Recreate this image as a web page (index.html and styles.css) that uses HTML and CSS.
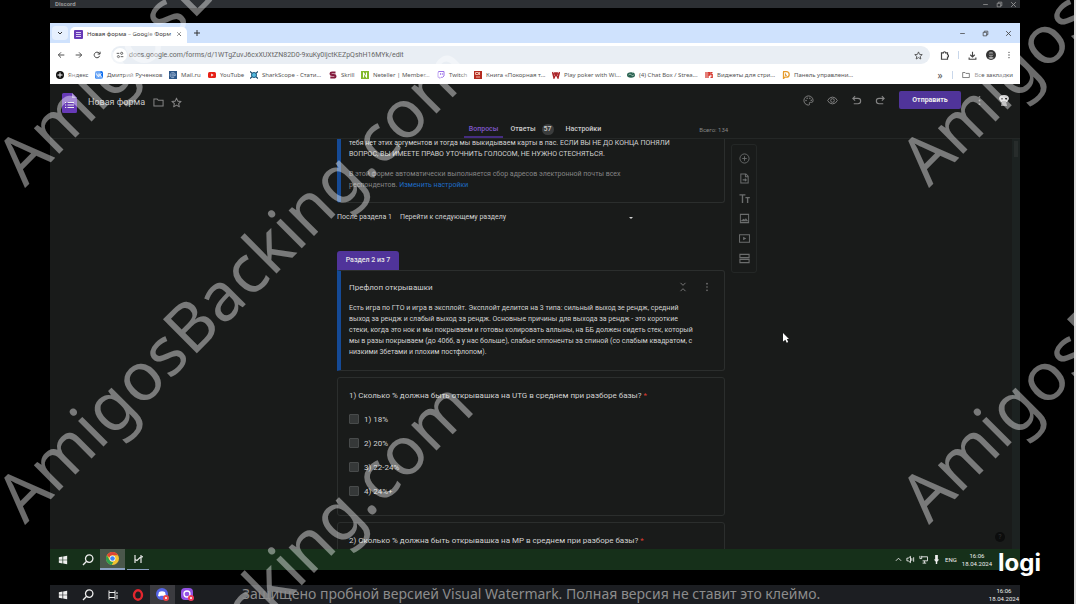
FILE: index.html
```
<!DOCTYPE html>
<html lang="ru">
<head>
<meta charset="utf-8">
<title>Новая форма – Google Формы</title>
<link rel="stylesheet" href="styles.css">
</head>
<body>
<svg class="defs" aria-hidden="true">
  <symbol id="win" viewBox="0 0 12 12"><path fill="currentColor" d="M1 2.6l4.4-.7v3.7H1zM6.2 1.8L11 1v4.6H6.2zM1 6.4h4.4v3.7L1 9.4zM6.2 6.4H11V11l-4.8-.8z"/></symbol>
  <symbol id="search" viewBox="0 0 12 12"><g fill="none" stroke="currentColor" stroke-width="1.3"><circle cx="7.2" cy="4.6" r="3.7"/><path d="M4.6 7.3L1 11"/></g></symbol>
  <symbol id="star" viewBox="0 0 12 12"><path fill="none" stroke="currentColor" stroke-width="1.1" stroke-linejoin="round" d="M6 1.2l1.4 3.3 3.6.3-2.7 2.4.8 3.5L6 8.8l-3.1 1.9.8-3.5L1 4.8l3.6-.3z"/></symbol>
  <symbol id="folder" viewBox="0 0 12 12"><path fill="none" stroke="currentColor" stroke-width="1.1" d="M1 2.3h3.6l1.2 1.3H11v6.2H1z"/></symbol>
  <symbol id="dots" viewBox="0 0 12 12"><g fill="currentColor"><circle cx="6" cy="2" r="1"/><circle cx="6" cy="6" r="1"/><circle cx="6" cy="10" r="1"/></g></symbol>
  <symbol id="close" viewBox="0 0 12 12"><path stroke="currentColor" stroke-width="1.5" d="M2 2l8 8M10 2l-8 8"/></symbol>
  <symbol id="minus" viewBox="0 0 12 12"><path stroke="currentColor" stroke-width="1.3" d="M2 6h8"/></symbol>
  <symbol id="restore" viewBox="0 0 12 12"><path fill="none" stroke="currentColor" stroke-width="1.3" d="M2 4h6v6H2zM4 4V2h6v6H8"/></symbol>
  <symbol id="down" viewBox="0 0 12 12"><path fill="none" stroke="currentColor" stroke-width="2" d="M2 4l4 4 4-4"/></symbol>
  <symbol id="back" viewBox="0 0 12 12"><path fill="none" stroke="currentColor" stroke-width="1.4" d="M11 6H2M6 2L2 6l4 4"/></symbol>
  <symbol id="forward" viewBox="0 0 12 12"><path fill="none" stroke="currentColor" stroke-width="1.4" d="M1 6h9M6 2l4 4-4 4"/></symbol>
  <symbol id="reload" viewBox="0 0 12 12"><path fill="none" stroke="currentColor" stroke-width="1.5" d="M10 7.2A4.2 4.2 0 1 1 9 3l1.4 1.4M10.6 1v3.6H7"/></symbol>
  <symbol id="undo" viewBox="0 0 12 12"><path fill="none" stroke="currentColor" stroke-width="1.2" d="M4.5 1.2L2 3.7l2.500 2.500M2 3.700h5.600a2.900 2.900 0 0 1 0 5.900H3"/></symbol>
</svg>

<div class="screen">
  <div class="discord">
    <span>Discord</span>
    <span class="win-controls"><svg class="ico7"><use href="#minus"/></svg><svg class="ico7"><use href="#restore"/></svg><svg class="ico7"><use href="#close"/></svg></span>
  </div>

  <div class="browser">
    <div class="tabstrip">
      <button class="tab-search" aria-label="Поиск вкладок"><svg class="ico6"><use href="#down"/></svg></button>
      <div class="browser-tab">
        <svg class="ico9" viewBox="0 0 9 9"><rect width="9" height="9" rx="1" fill="#673ab7"/><path stroke="#d9cdf0" stroke-width="1" d="M2 2.500h5M2 4.500h5M2 6.500h5"/></svg>
        <span class="tab-title">Новая форма – Google Форм</span>
        <button aria-label="Закрыть"><svg class="ico6"><use href="#close"/></svg></button>
      </div>
      <button class="new-tab" aria-label="Новая вкладка"><svg class="ico6" viewBox="0 0 6 6"><path stroke="currentColor" d="M3 0v6M0 3h6"/></svg></button>
      <span class="win-controls wide"><svg class="ico7"><use href="#minus"/></svg><svg class="ico7"><use href="#restore"/></svg><svg class="ico7"><use href="#close"/></svg></span>
    </div>

    <div class="toolbar">
      <button aria-label="Назад"><svg class="ico8"><use href="#back"/></svg></button>
      <button aria-label="Вперёд"><svg class="ico8"><use href="#forward"/></svg></button>
      <button aria-label="Обновить"><svg class="ico8"><use href="#reload"/></svg></button>
      <div class="omnibox">
        <span class="site-info"><svg class="ico8" viewBox="0 0 12 12"><g fill="none" stroke="#555" stroke-width="1.4"><path d="M5 3.500h-4M7 8.500h4"/><circle cx="8.500" cy="3.500" r="1.600"/><circle cx="3.500" cy="8.500" r="1.600"/></g></svg></span>
        <input type="text" aria-label="Адрес" value="docs.google.com/forms/d/1WTgZuvJ6cxXUXtZN82D0-9xuKy0ijctKEZpQshH16MYk/edit">
        <svg class="ico9"><use href="#star"/></svg>
      </div>
      <div class="tools">
        <svg class="ico9" viewBox="0 0 12 12"><path fill="none" stroke="currentColor" stroke-width="1.600" d="M2 2.500h2.500a1.500 1.500 0 0 1 3 0H10V5a1.500 1.500 0 0 1 0 3v3H2z"/></svg>
        <span class="divider"></span>
        <svg class="ico9" viewBox="0 0 12 12"><path fill="none" stroke="currentColor" stroke-width="1.500" d="M6 1v6.500M3 5l3 3 3-3M1.500 8.500V11h9V8.500"/></svg>
        <svg class="ico10" viewBox="0 0 12 12"><circle cx="6" cy="6" r="6" fill="#333"/><circle cx="6" cy="5" r="2.800" fill="#888"/><path fill="#222" d="M3 4.500h6v1H3z"/><path fill="#aaa" d="M2.500 9.500q3.500-3 7 0L6 11z"/></svg>
        <svg class="ico8"><use href="#dots"/></svg>
      </div>
    </div>

    <nav class="bookmarks">
      <a href="#"><svg class="ico8" viewBox="0 0 8 8"><circle cx="4" cy="4" r="4" fill="#111"/><path stroke="#fff" d="M4 1.500v5M1.500 4h5"/></svg>Яндекс</a>
      <a href="#"><svg class="ico8" viewBox="0 0 8 8"><rect width="8" height="8" rx="2" fill="#0a6cf0"/><path fill="none" stroke="#fff" d="M1.500 2.500q.5 3 2.500 3v-3M6.500 2.500L4.500 4l2 1.600"/></svg>Дмитрий Рученков</a>
      <a href="#"><svg class="ico8" viewBox="0 0 8 8"><rect width="8" height="8" fill="#2d5789"/><g fill="none" stroke="#a8bfdb" stroke-width=".8"><circle cx="4" cy="4" r="1.200"/><path d="M5.200 4q.2 1.500 1.200.5A2.600 2.600 0 1 0 5.200 6.300"/></g></svg>Mail.ru</a>
      <a href="#"><svg class="ico8" viewBox="0 0 8 8"><rect y="1" width="8" height="6" rx="1.500" fill="#e62117"/><path fill="#fff" d="M3.200 2.600L5.600 4 3.200 5.400z"/></svg>YouTube</a>
      <a href="#"><svg class="ico8" viewBox="0 0 8 8"><path stroke="#174768" stroke-width="1.200" d="M0 .5l8 7M8 .5l-8 7"/><circle cx="4" cy="4" r="2.500" fill="#56bce0" stroke="#1d5a80"/></svg>SharkScope - Стати...</a>
      <a href="#"><svg class="ico8" viewBox="0 0 8 8"><path fill="none" stroke="#841c3e" stroke-width="2" d="M6.500 1.400H3Q1.500 1.400 1.500 2.700T3 4h2q1.500 0 1.500 1.300T5 6.600H1.300"/></svg>Skrill</a>
      <a href="#"><svg class="ico8" viewBox="0 0 8 8"><rect width="8" height="8" fill="#83b92c"/><path fill="none" stroke="#fff" d="M2.500 6.500v-5l3 5v-5"/></svg>Neteller | Member...</a>
      <a href="#"><svg class="ico8" viewBox="0 0 8 8"><path fill="#fff" stroke="#9a70e8" d="M1.500.5H7V5L5.500 6.300H4L2.800 7.500V6.300H1V2z"/><path stroke="#9a70e8" stroke-width=".8" d="M3.500 2v2M5.300 2v2"/></svg>Twitch</a>
      <a href="#"><svg class="ico8" viewBox="0 0 8 8"><rect width="8" height="8" fill="#b42b20"/><path stroke="#f0b9a8" d="M1.500 1.500h3v2h-3zM2 6h4M5.500 1v3" fill="none"/></svg>Книга «Покорная т...</a>
      <a href="#"><svg class="ico8" viewBox="0 0 8 8"><path fill="none" stroke="#ab2429" stroke-width="1.400" d="M.5 1l1.500 6L4 3l2 4 1.500-6M1.500 3h5M3 1v2M5 1v2"/></svg>Play poker with Wi...</a>
      <a href="#"><svg class="ico8" viewBox="0 0 8 8"><ellipse cx="4" cy="4" rx="4" ry="2.800" fill="#286150"/><path fill="none" stroke="#b6cec5" stroke-width=".8" d="M1.500 4q1.500-2 3 0t2.500-.5M5 2l2-1"/></svg>(4) Chat Box / Strea...</a>
      <a href="#"><svg class="ico8" viewBox="0 0 8 8"><path fill="none" stroke="#d63a30" stroke-width="1.300" d="M1 1v6M3 7V1.600h1.500v2.500H3M7.500 1.600H6v2h1.200v2.800H5.500"/></svg>Виджеты для стри...</a>
      <a href="#"><svg class="ico8" viewBox="0 0 8 8"><path fill="none" stroke="#e69b2b" stroke-width="1.300" d="M1 .7h3.500a2.700 2.700 0 0 1 0 5.400H3L1.500 7.500V1"/><path stroke="#e69b2b" d="M3.500 2.500v2h1"/></svg>Панель управлени...</a>
      <span class="more">»</span>
      <span class="divider"></span>
      <a href="#"><svg class="ico8"><use href="#folder"/></svg>Все закладки</a>
    </nav>

    <header class="form-header">
      <div class="title-row">
        <svg class="forms-logo" viewBox="0 0 15 20"><path fill="#673ab7" d="M1.500 0H10l5 5v13.500a1.500 1.500 0 0 1-1.500 1.500h-12A1.500 1.500 0 0 1 0 18.500v-17A1.500 1.500 0 0 1 1.500 0z"/><path fill="#b39ddb" d="M10 0l5 5h-5z"/><path stroke="#eee" stroke-width="1.200" d="M3 9.500h1.200M5.500 9.500H12M3 12h1.200M5.500 12H12M3 14.500h1.200M5.500 14.500H12"/></svg>
        <h1>Новая форма</h1>
        <svg class="ico11"><use href="#folder"/></svg>
        <svg class="ico11"><use href="#star"/></svg>
        <div class="actions">
          <svg class="ico11" viewBox="0 0 12 12"><path fill="none" stroke="currentColor" d="M6 1a5 5 0 0 0 0 10q1.500 0 1-1.500T8 8h1.500Q11 8 11 6a5 5 0 0 0-5-5z"/><g fill="currentColor"><circle cx="3.300" cy="6" r=".8"/><circle cx="4.500" cy="3.500" r=".8"/><circle cx="7.500" cy="3.500" r=".8"/><circle cx="9" cy="5.800" r=".8"/></g></svg>
          <svg class="ico11" viewBox="0 0 12 12"><g fill="none" stroke="currentColor"><path d="M.7 6Q2.500 2.300 6 2.300T11.300 6Q9.500 9.700 6 9.700T.7 6z"/><circle cx="6" cy="6" r="2"/></g></svg>
          <svg class="ico11"><use href="#undo"/></svg>
          <svg class="ico11 flip"><use href="#undo"/></svg>
          <button class="send">Отправить</button>
          <svg class="ico11"><use href="#dots"/></svg>
          <svg class="ico12" viewBox="0 0 12 12"><path fill="#d5d5d5" d="M1 5q0-4 5-4t5 4l-2 3H3z"/><path fill="#333" d="M3 4h2v1.500H3zM7 4h2v1.500H7z"/><path fill="#999" d="M4 7h4l1 5H3z"/></svg>
        </div>
      </div>
      <div class="tabs-row">
        <nav class="form-tabs"><a href="#" class="active">Вопросы</a><a href="#">Ответы <b>57</b></a><a href="#">Настройки</a></nav>
        <span class="total">Всего: 134</span>
      </div>
    </header>

    <main class="form-page">
      <div class="column">
        <section class="card intro">
          <p>тебя нет этих аргументов и тогда мы выкидываем карты в пас. ЕСЛИ ВЫ НЕ ДО КОНЦА ПОНЯЛИ<br>ВОПРОС, ВЫ ИМЕЕТЕ ПРАВО УТОЧНИТЬ ГОЛОСОМ, НЕ НУЖНО СТЕСНЯТЬСЯ.</p>
          <p class="note">В этой форме автоматически выполняется сбор адресов электронной почты всех<br>респондентов. <a href="#">Изменить настройки</a></p>
        </section>
        <div class="after">
          <label for="next">После раздела 1</label>
          <select id="next"><option>Перейти к следующему разделу</option></select>
          <svg class="caret" viewBox="0 0 4 2"><path fill="currentColor" d="M0 0h4L2 2z"/></svg>
        </div>
        <div class="section-tag">Раздел 2 из 7</div>
        <section class="card section">
          <div class="section-head">
            <h2>Префлоп открывашки</h2>
            <svg class="ico10" viewBox="0 0 12 12"><path fill="none" stroke="currentColor" stroke-width="1.200" d="M3 1l3 3 3-3M3 11l3-3 3 3"/></svg>
            <svg class="ico10"><use href="#dots"/></svg>
          </div>
          <p>Есть игра по ГТО и игра в эксплойт. Эксплойт делится на 3 типа: сильный выход зе рендж, средний<br>выход за рендж и слабый выход за рендж. Основные причины для выхода за рендж - это короткие<br>стеки, когда это нок и мы покрываем и готовы колировать аллыны, на ББ должен сидеть стек, который<br>мы в разы покрываем (до 40бб, а у нас больше), слабые оппоненты за спиной (со слабым квадратом, с<br>низкими 3бетами и плохим постфлопом).</p>
        </section>
        <section class="card question">
          <h3>1) Сколько % должна быть открывашка на UTG в среднем при разборе базы? <i>*</i></h3>
          <label><input type="checkbox">1) 18%</label>
          <label><input type="checkbox">2) 20%</label>
          <label><input type="checkbox">3) 22-24%</label>
          <label><input type="checkbox">4) 24%+</label>
        </section>
        <section class="card question">
          <h3>2) Сколько % должна быть открывашка на MP в среднем при разборе базы? <i>*</i></h3>
        </section>
      </div>
      <aside class="side-tools">
        <svg class="ico11" viewBox="0 0 12 12"><g fill="none" stroke="currentColor"><circle cx="6" cy="6" r="5"/><path d="M6 3.500v5M3.500 6h5"/></g></svg>
        <svg class="ico11" viewBox="0 0 12 12"><path fill="none" stroke="currentColor" stroke-width="1.100" d="M2 1h5.500L10 3.500V11H2zM7 1v3h3M4 7.500h4M6.500 6L8 7.500 6.500 9"/></svg>
        <svg class="ico11" viewBox="0 0 12 12"><path fill="none" stroke="currentColor" stroke-width="1.500" d="M.5 2H7M3.800 2v9M7 5h4.800M9.400 5v6"/></svg>
        <svg class="ico11" viewBox="0 0 12 12"><path fill="none" stroke="currentColor" stroke-width="1.100" d="M1.500 1.500h9v9h-9zM3 8.500h6L7.500 6.500 6 8 5 7z"/></svg>
        <svg class="ico11" viewBox="0 0 12 12"><path fill="none" stroke="currentColor" stroke-width="1.100" d="M.6 2h10.800v8H.6z"/><path fill="currentColor" d="M4.500 4L8 6 4.500 8z"/></svg>
        <svg class="ico11" viewBox="0 0 12 12"><path fill="none" stroke="currentColor" stroke-width="1.200" d="M1 1.500h10v3.500H1zM1 7h10v3.500H1z"/></svg>
      </aside>
      <div class="scrollbar"><span></span></div>
      <button class="help" aria-label="Справка">?</button>
      <svg class="cursor" viewBox="0 0 7 10"><path fill="#fff" d="M0 0l6 6H3.800L5.200 9l-1.500.7L2.400 6.800 0 8.500z"/></svg>
    </main>
  </div>

  <div class="taskbar inner">
    <span class="task"><svg class="ico10"><use href="#win"/></svg></span>
    <span class="task"><svg class="ico12"><use href="#search"/></svg></span>
    <span class="task current"><svg class="ico13" viewBox="0 0 12 12"><circle cx="6" cy="6" r="6" fill="#f2c230"/><path fill="#dc4436" d="M.8 3A6 6 0 0 1 11.200 3H6a3 3 0 0 0-2.800 2z"/><path fill="#2f9e52" d="M.8 3l2.600 4.500A3 3 0 0 0 6.800 9L5.300 12A6 6 0 0 1 .8 3z"/><circle cx="6" cy="6" r="2.700" fill="#fff"/><circle cx="6" cy="6" r="2.100" fill="#4285f4"/></svg></span>
    <span class="task open"><svg class="ico10" viewBox="0 0 10 10"><path fill="none" stroke="#e8e8e8" stroke-width="1.200" d="M2 1v8M8 1v8M2 5.500l2 1 3-3 3-1"/></svg></span>
    <div class="tray">
      <svg class="ico7" viewBox="0 0 8 8"><path fill="none" stroke="currentColor" d="M1 5.500l3-3 3 3"/></svg>
      <svg class="ico9" viewBox="0 0 10 10"><path fill="none" stroke="currentColor" d="M1 3.500h1.500L5 1.500v7L2.500 6.500H1zM6.500 3.500v3M8.500 2.500v5"/></svg>
      <svg class="ico9" viewBox="0 0 10 10"><path fill="none" stroke="currentColor" d="M3 2h6.500v4.500H4M1 1v3h2V1M6 6.500V9M4 9h4"/></svg>
      <svg class="ico9" viewBox="0 0 10 10"><path fill="currentColor" d="M3.500 0h3v5H8L5.800 7.500V10H4.200V7.500L2 5h1.500z"/></svg>
      <span>ENG</span>
      <span class="clock">16:06<br>18.04.2024</span>
    </div>
    <span class="logi">logi</span>
  </div>

  <div class="taskbar outer">
    <span class="task"><svg class="ico10"><use href="#win"/></svg></span>
    <span class="task"><svg class="ico12"><use href="#search"/></svg></span>
    <span class="task"><svg class="ico10" viewBox="0 0 10 10"><path fill="none" stroke="currentColor" d="M1 2.500h6v5H1zM1 .5v2M7 .5v2M1 7.500v2M7 7.500v2M9 2v2M9 5v4"/></svg></span>
    <span class="task"><svg class="ico12" viewBox="0 0 12 12"><ellipse cx="6" cy="6" rx="4" ry="4.700" fill="none" stroke="#e3262e" stroke-width="2.400"/></svg></span>
    <span class="task current"><svg class="ico13" viewBox="0 0 13 13"><circle cx="6" cy="6" r="6" fill="#5565e8"/><path fill="#fff" d="M3 4q3-1.500 6 0l1 4-2 .5-.5-.7h-3l-.5.700L2 8z"/><circle cx="10" cy="10" r="3" fill="#ee4548"/><circle cx="10" cy="10" r="1" fill="#fff"/></svg></span>
    <span class="task"><svg class="ico13" viewBox="0 0 13 13"><rect width="12" height="12" rx="4" fill="#9452e6"/><circle cx="6" cy="6" r="3" fill="none" stroke="#fff" stroke-width="1.300"/><circle cx="10" cy="10" r="3" fill="#f03a58"/><circle cx="10" cy="10" r="1" fill="#fff"/></svg></span>
    <div class="tray"><span class="clock">16:06<br>18.04.2024</span></div>
  </div>
</div>

<svg class="watermark">
  <text transform="translate(25 188) rotate(-45)">AmigosBacking.com</text>
  <text transform="translate(25 525) rotate(-45)">AmigosBacking.com</text>
  <text transform="translate(25 862) rotate(-45)">AmigosBacking.com</text>
  <text transform="translate(929 188) rotate(-45)">AmigosBacking.com</text>
  <text transform="translate(929 525) rotate(-45)">AmigosBacking.com</text>
</svg>
<p class="trial">Защищено пробной версией Visual Watermark. Полная версия не ставит это клеймо.</p>
</body>
</html>
```

FILE: styles.css
```
* { box-sizing: border-box; }
body {
  margin: 0;
  height: 100vh;
  overflow: hidden;
  position: relative;
  background: #000;
  border-right: 2px solid #dcdcdc;
  font: 7px/11px Roboto, "Noto Sans", sans-serif;
  color: #d2d2d2;
}
h1, h2, h3, p { margin: 0; font-weight: 400; }
a { color: inherit; text-decoration: none; }
button, input, select { font: inherit; color: inherit; border: 0; padding: 0; background: none; }
button { display: flex; align-items: center; justify-content: center; }
svg { flex: none; display: block; }
.defs { position: absolute; width: 0; height: 0; }
.ico6 { width: 6px; height: 6px; }
.ico7 { width: 7px; height: 7px; }
.ico8 { width: 8px; height: 8px; }
.ico9 { width: 9px; height: 9px; }
.ico10 { width: 10px; height: 10px; }
.ico11 { width: 11px; height: 11px; }
.ico12 { width: 12px; height: 12px; }
.ico13 { width: 13px; height: 13px; }
.flip { transform: scaleX(-1); }

.screen { height: 100%; display: flex; flex-direction: column; padding: 0 54px 0 50px; }

.discord {
  flex: none;
  display: flex;
  align-items: center;
  justify-content: space-between;
  height: 8px;
  margin-bottom: 15px;
  padding: 0 3px 0 5px;
  background: #2c2f33;
  color: #999;
  font-size: 6px;
  line-height: 8px;
  font-weight: 700;
}
.win-controls { display: flex; gap: 7px; }
.win-controls.wide { gap: 16px; margin-left: auto; color: #444; }

.browser { flex: 1; min-height: 0; display: flex; flex-direction: column; background: #191b1a; }
.tabstrip {
  flex: none;
  display: flex;
  align-items: center;
  height: 20px;
  padding: 0 8px 0 2px;
  background: #cfe2fd;
  color: #333;
  font: 6px/10px "Noto Sans", sans-serif;
}
.tab-search { width: 16px; height: 14px; border-radius: 4px; background: #e6f0fe; }
.browser-tab {
  display: flex;
  align-items: center;
  gap: 4px;
  width: 117px;
  height: 16px;
  margin: 4px 0 0 2px;
  padding: 0 5px 2px 4px;
  border-radius: 5px 5px 0 0;
  background: #fff;
}
.tab-title { flex: 1; overflow: hidden; white-space: nowrap; }
.new-tab { width: 20px; height: 16px; }

.toolbar {
  flex: none;
  display: flex;
  align-items: center;
  gap: 10px;
  height: 23px;
  padding: 1px 7px 0;
  background: #fff;
  color: #444;
}
.omnibox {
  flex: 1;
  display: flex;
  align-items: center;
  gap: 2px;
  height: 18px;
  padding: 0 7px 0 2px;
  border-radius: 9px;
  background: #e9eef4;
}
.tools { display: flex; align-items: center; gap: 9px; }
.site-info { display: grid; place-items: center; width: 14px; height: 14px; border-radius: 7px; background: #fff; }
.omnibox input { flex: 1; min-width: 0; outline: 0; color: #666; }
.divider { width: 1px; height: 8px; background: #c9d7ea; }

.bookmarks {
  flex: none;
  display: grid;
  grid-template-columns: 39px 74px 39px 42px 79px 32px 76px 37px 78px 75px 78px 77px 1fr 15px 10px auto;
  align-items: center;
  height: 18px;
  padding: 0 7px 0 6px;
  background: #fff;
  color: #555;
  font: 6px/10px "Noto Sans", sans-serif;
  white-space: nowrap;
}
.bookmarks a { display: flex; align-items: center; gap: 4px; }
.more { font-size: 10px; }

.form-header { flex: none; border-bottom: 1px solid #242726; color: #858585; }
.title-row { display: flex; align-items: center; gap: 7px; height: 37px; padding: 0 10px 0 12px; }
.forms-logo { width: 15px; height: 20px; }
.title-row h1 { margin: 0 1px 0 4px; font-size: 9px; color: #c8c8c8; }
.actions { flex: 1; display: flex; align-items: center; justify-content: flex-end; gap: 13px; height: 100%; padding-bottom: 5px; }
.send {
  width: 62px;
  height: 18px;
  border-radius: 2px;
  background: #50349a;
  color: #eee;
  font-weight: 700;
}
.tabs-row { display: grid; grid-template-columns: 1fr auto 1fr; height: 17px; }
.form-tabs { grid-column: 2; display: flex; gap: 2px; color: #ccc; font-weight: 500; }
.form-tabs a { display: flex; align-items: center; gap: 6px; padding: 2px 5px 0; border-bottom: 2px solid transparent; }
.form-tabs .active { color: #8058cb; border-color: #452d80; }
.form-tabs b { width: 12px; border-radius: 6px; background: #3b3d3d; text-align: center; font-weight: 500; }
.total { align-self: center; padding-left: 93px; font-size: 6px; }

.form-page { position: relative; flex: 1; min-height: 0; overflow: hidden; display: grid; grid-template-columns: 1fr 388px 1fr; padding-right: 8px; }
.column { grid-column: 2; white-space: nowrap; }
.card { padding: 0 11px; border: 1px solid #2b2e2d; border-radius: 3px; margin-bottom: 6px; }
.intro { height: 65px; margin: 0; border-top: 0; border-left: 4px solid #154a96; border-radius: 0 0 3px 3px; padding: 0 8px; }
.intro p { margin-top: -1px; }
.intro .note { margin-top: 9px; color: #858585; }
.note a { color: #1e6cc8; }
.after { display: flex; align-items: center; gap: 8px; height: 29px; margin-bottom: 19px; }
.after select { width: 221px; appearance: none; }
.caret { width: 4px; height: 2px; }
.section-tag { width: 62px; height: 19px; border-radius: 3px 3px 0 0; background: #50349a; color: #e6e6e6; font-weight: 500; line-height: 19px; text-align: center; }
.section { height: 101px; padding: 0 8px; border-left: 4px solid #154a96; border-radius: 0 3px 3px 0; }
.section-head { display: flex; align-items: center; gap: 14px; height: 32px; padding-right: 4px; color: #777; }
.section-head h2 { flex: 1; font-size: 8px; color: #d2d2d2; }
.question { height: 139px; }
.question h3 { height: 29px; font-size: 8px; line-height: 36px; }
.question i { color: #dc3c30; font-style: normal; }
.question label { display: flex; align-items: center; gap: 5px; height: 24px; font-size: 8px; }
.question input { appearance: none; width: 10px; height: 10px; margin: 0; border: 1px solid #484b4b; border-radius: 1px; background: #353838; }

.side-tools {
  justify-self: start;
  align-self: start;
  display: flex;
  flex-direction: column;
  align-items: center;
  gap: 9px;
  width: 26px;
  margin: 5px 0 0 6px;
  padding: 8px 0;
  border: 1px solid #242726;
  border-radius: 3px;
  color: #6b6d6d;
}
.scrollbar { position: absolute; top: 0; right: 0; bottom: 0; width: 8px; background: #1c2221; }
.scrollbar span { display: block; height: 16px; margin: 2px 2px 0; background: #272c2b; }
.help { position: absolute; right: 15px; bottom: 7px; width: 10px; height: 10px; border-radius: 5px; background: #0c0d0d; color: #333; }
.cursor { position: absolute; left: 733px; top: 194px; width: 7px; height: 10px; }

.taskbar { position: relative; flex: none; display: flex; color: #eee; }
.inner { height: 21px; margin-bottom: 15px; background: #16301a; }
.outer { height: 19px; background: #1c1e22; }
.task { display: grid; place-items: center; width: 25px; }
.task.current { background: #4a574b; border-bottom: 2px solid #8aa0c0; }
.task.open { border-bottom: 1px solid #8aa0c0; width: 22px; margin-left: 2px; }
.outer .task.current { background: #3b3b40; border: 0; }
.tray { display: flex; align-items: center; gap: 4px; margin-left: auto; padding-right: 28px; font-size: 6px; }
.clock { padding-left: 1px; line-height: 8px; text-align: center; }
.outer .tray { padding-right: 1px; }
.logi { position: absolute; right: -21px; top: 0; color: #fff; font: 700 24px/28px Inter, sans-serif; }

.watermark { position: absolute; inset: 0; width: 100%; height: 100%; pointer-events: none; font: 67px "Noto Sans", sans-serif; fill: rgba(255, 255, 255, .42); }
.trial { position: absolute; left: 242px; bottom: 0; font: 14px/20px "Noto Sans", sans-serif; color: #8c8c8c; white-space: nowrap; }
```
